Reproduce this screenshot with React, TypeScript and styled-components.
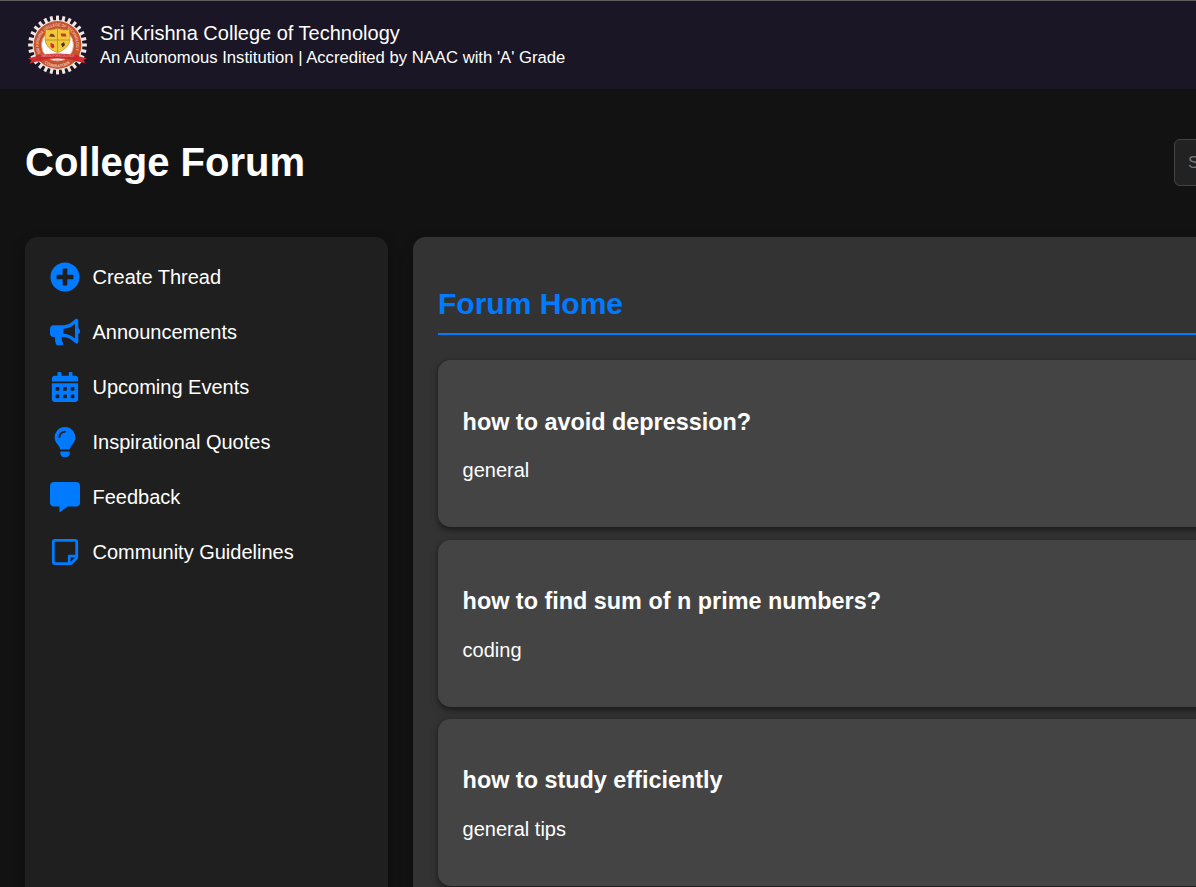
import React from 'react';
import styled, { createGlobalStyle } from 'styled-components';
import {
  FaPlusCircle,
  FaBullhorn,
  FaCalendarAlt,
  FaLightbulb,
  FaCommentAlt,
  FaRegStickyNote,
} from 'react-icons/fa';

const GlobalStyle = createGlobalStyle`
  * { box-sizing: border-box; }
  body {
    margin: 0;
    background: #121212;
    color: #fff;
    font-family: "Liberation Sans", Arial, sans-serif;
    font-size: 20px;
    overflow: hidden;
  }
`;

const Page = styled.div`
  width: 100%;
  height: 887px;
  overflow: hidden;
  display: flex;
  flex-direction: column;
  border-top: 1px solid #5f5f60;
`;

const TopBar = styled.header`
  flex: none;
  height: 88px;
  padding: 0 27px;
  display: flex;
  align-items: center;
  gap: 12px;
  background: #1a1625;
`;

const Crest = styled.svg`
  flex: none;
  width: 61px;
  height: 62px;
`;

const Institution = styled.div`
  display: flex;
  flex-direction: column;
  white-space: nowrap;
`;

const InstitutionName = styled.span`
  font-size: 20px;
  line-height: 25px;
`;

const InstitutionNote = styled.span`
  font-size: 16.67px;
  line-height: 23px;
`;

const Content = styled.div`
  flex: 1;
  min-height: 0;
  width: 1496px;
  padding: 0 25px;
  display: flex;
  flex-direction: column;
`;

const TitleRow = styled.div`
  flex: none;
  height: 148px;
  padding-bottom: 2px;
  display: flex;
  align-items: center;
  justify-content: space-between;
`;

const Title = styled.h1`
  margin: 0;
  font-size: 40px;
  line-height: 46px;
`;

const Search = styled.input`
  width: 297px;
  height: 47px;
  padding: 2px 13px 0;
  border: 1px solid #444;
  border-radius: 6px;
  background: #222;
  color: #fff;
  font-family: inherit;
  font-size: 16.67px;
  &::placeholder { color: #757575; }
`;

const Columns = styled.div`
  flex: none;
  height: 900px;
  display: flex;
  gap: 25px;
`;

const Sidebar = styled.nav`
  width: 363px;
  padding: 25px;
  display: flex;
  flex-direction: column;
  gap: 25px;
  border-radius: 12.5px;
  background: #1f1f1f;
  box-shadow: 0 5px 12.5px rgba(0, 0, 0, 0.3);
`;

const NavItem = styled.a`
  height: 30px;
  display: flex;
  align-items: center;
  gap: 12.5px;
  line-height: 23px;
  svg {
    width: 30px;
    height: 30px;
    color: #007bff;
  }
`;

const Forum = styled.main`
  flex: 1;
  padding: 50px 25px 25px;
  border-radius: 12.5px;
  background: #333;
  box-shadow: 0 5px 12.5px rgba(0, 0, 0, 0.3);
`;

const ForumHeading = styled.h2`
  margin: 0 0 25.3px;
  padding-bottom: 12px;
  border-bottom: 2px solid #007bff;
  color: #007bff;
  font-size: 30px;
  line-height: 34px;
`;

const Thread = styled.article`
  height: 167px;
  margin-bottom: 12.3px;
  padding: 48.4px 25px 0 24.6px;
  border-radius: 12.5px;
  background: #444;
  box-shadow: 0 2.5px 6.25px rgba(0, 0, 0, 0.5);
`;

const ThreadTitle = styled.h3`
  margin: 0 0 23.7px;
  font-size: 23.4px;
  line-height: 27px;
`;

const ThreadTopic = styled.p`
  margin: 0;
  line-height: 23px;
`;

const TEETH = Array.from({ length: 28 }, (_, i) => (i * 360) / 28);

function CollegeCrest() {
  return (
    <Crest viewBox="0 0 61 62">
      <defs>
        <path id="upper" d="M13.7 39.2 A18.7 18.7 0 1 1 47.3 39.2" />
        <path id="lower" d="M15 47 A22 22 0 0 0 46 47" />
      </defs>
      <g fill="#f3e6e0">
        {TEETH.map((a) => (
          <rect key={a} x="29" y="1.6" width="3" height="6" transform={`rotate(${a} 30.5 31)`} />
        ))}
        <circle cx="30.5" cy="31" r="25" />
      </g>
      <circle cx="30.5" cy="31" r="23.9" fill="#c4522e" />
      <circle cx="30.5" cy="31" r="16" fill="#fff" stroke="#e5a084" strokeWidth="0.8" />
      <g fill="#ecc3b2" fontFamily="Liberation Sans, sans-serif" fontWeight="700">
        <text fontSize="4.2">
          <textPath href="#upper" textLength="72" lengthAdjust="spacingAndGlyphs">SRI KRISHNA COLLEGE OF TECHNOLOGY</textPath>
        </text>
        <text fontSize="4.2">
          <textPath href="#lower" startOffset="3" textLength="28" lengthAdjust="spacingAndGlyphs">COIMBATORE</textPath>
        </text>
      </g>
      <path d="M18.5 15.5 Q24.5 17 30.5 14.4 Q36.5 17 42.5 15.5 L43 26 Q42 34.5 30.5 38.8 Q19 34.5 18 26 Z" fill="#f3c93c" stroke="#b98620" strokeWidth="0.7" />
      <path d="M30.5 15V38 M18.5 26H42.5" stroke="#b5842a" strokeWidth="0.8" />
      <path d="M22 22.5l2-3 3 1 1 2.5z" fill="#7a3f20" />
      <path d="M33.5 19.5h5l1 3h-5z" fill="#c23c25" />
      <path d="M23.5 29l3 1 1 3-2 1.5-2-2z" fill="#d03127" />
      <path d="M34 30l3-2 1 3-2.5 2.5z" fill="#493421" />
      <path d="M1 44.5 L4.5 46 2.5 49.5 Q9 47.2 15 47.2 L14 41.5 7.5 42.8z M60 44.5 L56.5 46 58.5 49.5 Q52 47.2 46 47.2 L47 41.5 53.5 42.8z" fill="#cf2d2f" />
      <path d="M8.5 41.5 Q30.5 37.6 52.5 41.5 L51 46.7 Q30.5 42.2 10 46.7z" fill="#cb282c" />
      <text x="14" y="43.2" textLength="33" lengthAdjust="spacingAndGlyphs" fontSize="2.8" fill="#f0b5a8" fontFamily="Liberation Sans, sans-serif">LEARNING FOR EXCELLENCE</text>
      <path d="M28 46h5" stroke="#a5a0ad" strokeWidth="0.8" />
    </Crest>
  );
}

const LINKS = [
  { icon: FaPlusCircle, label: 'Create Thread' },
  { icon: FaBullhorn, label: 'Announcements' },
  { icon: FaCalendarAlt, label: 'Upcoming Events' },
  { icon: FaLightbulb, label: 'Inspirational Quotes' },
  { icon: FaCommentAlt, label: 'Feedback' },
  { icon: FaRegStickyNote, label: 'Community Guidelines' },
];

const THREADS = [
  { title: 'how to avoid depression?', topic: 'general' },
  { title: 'how to find sum of n prime numbers?', topic: 'coding' },
  { title: 'how to study efficiently', topic: 'general tips' },
];

export default function App() {
  return (
    <>
      <GlobalStyle />
      <Page>
        <TopBar>
          <CollegeCrest />
          <Institution>
            <InstitutionName>Sri Krishna College of Technology</InstitutionName>
            <InstitutionNote>An Autonomous Institution | Accredited by NAAC with 'A' Grade</InstitutionNote>
          </Institution>
        </TopBar>
        <Content>
          <TitleRow>
            <Title>College Forum</Title>
            <Search placeholder="Search..." />
          </TitleRow>
          <Columns>
            <Sidebar>
              {LINKS.map(({ icon: Icon, label }) => (
                <NavItem key={label}>
                  <Icon />
                  {label}
                </NavItem>
              ))}
            </Sidebar>
            <Forum>
              <ForumHeading>Forum Home</ForumHeading>
              {THREADS.map(({ title, topic }) => (
                <Thread key={title}>
                  <ThreadTitle>{title}</ThreadTitle>
                  <ThreadTopic>{topic}</ThreadTopic>
                </Thread>
              ))}
            </Forum>
          </Columns>
        </Content>
      </Page>
    </>
  );
}
